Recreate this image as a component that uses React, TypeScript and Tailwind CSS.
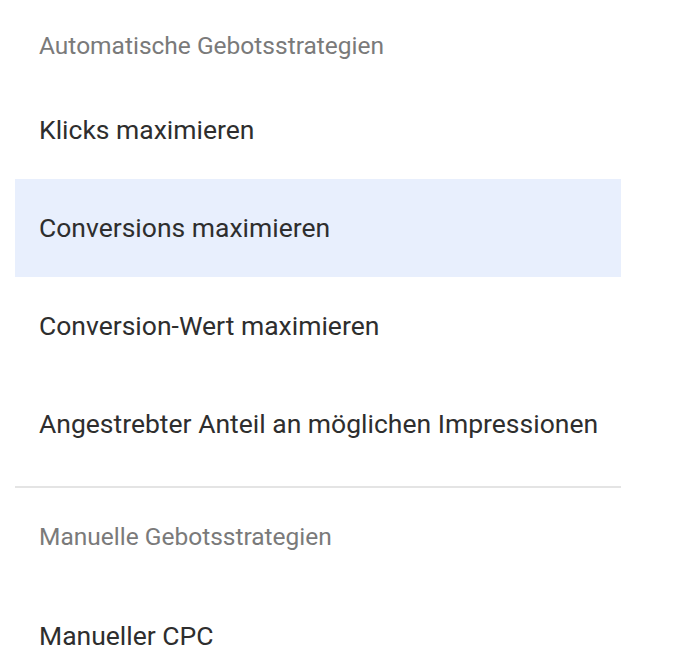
const groups = [
  {
    title: "Automatische Gebotsstrategien",
    items: [
      "Klicks maximieren",
      "Conversions maximieren",
      "Conversion-Wert maximieren",
      "Angestrebter Anteil an möglichen Impressionen",
    ],
  },
  {
    title: "Manuelle Gebotsstrategien",
    items: ["Manueller CPC"],
  },
];

const selected = "Conversions maximieren";

export default function App() {
  return (
    <div className="min-h-screen w-full bg-white font-[Roboto,sans-serif] overflow-hidden">
      <div className="ml-[15px] w-[606px]">
        {/* Automatische */}
        <div className="h-[81px] pt-[32px] pl-[24px] text-[24.5px] leading-[28px] text-[#7a7a7a]">
          {groups[0].title}
        </div>
        {groups[0].items.map((item) => (
          <div
            key={item}
            className={`flex h-[98px] items-center pl-[24px] text-[26.5px] leading-[28px] text-[#2e2e2e] ${
              item === selected ? "bg-[#e8effd]" : ""
            }`}
          >
            {item}
          </div>
        ))}

        <div className="mt-[13px] h-[2px] bg-[#e4e4e4]" />

        {/* Manuelle */}
        <div className="h-[99px] pt-[35px] pl-[24px] text-[24.5px] leading-[28px] text-[#7a7a7a]">
          {groups[1].title}
        </div>
        {groups[1].items.map((item) => (
          <div
            key={item}
            className="flex h-[98px] items-center pl-[24px] text-[26.5px] leading-[28px] text-[#2e2e2e]"
          >
            {item}
          </div>
        ))}
      </div>
    </div>
  );
}
